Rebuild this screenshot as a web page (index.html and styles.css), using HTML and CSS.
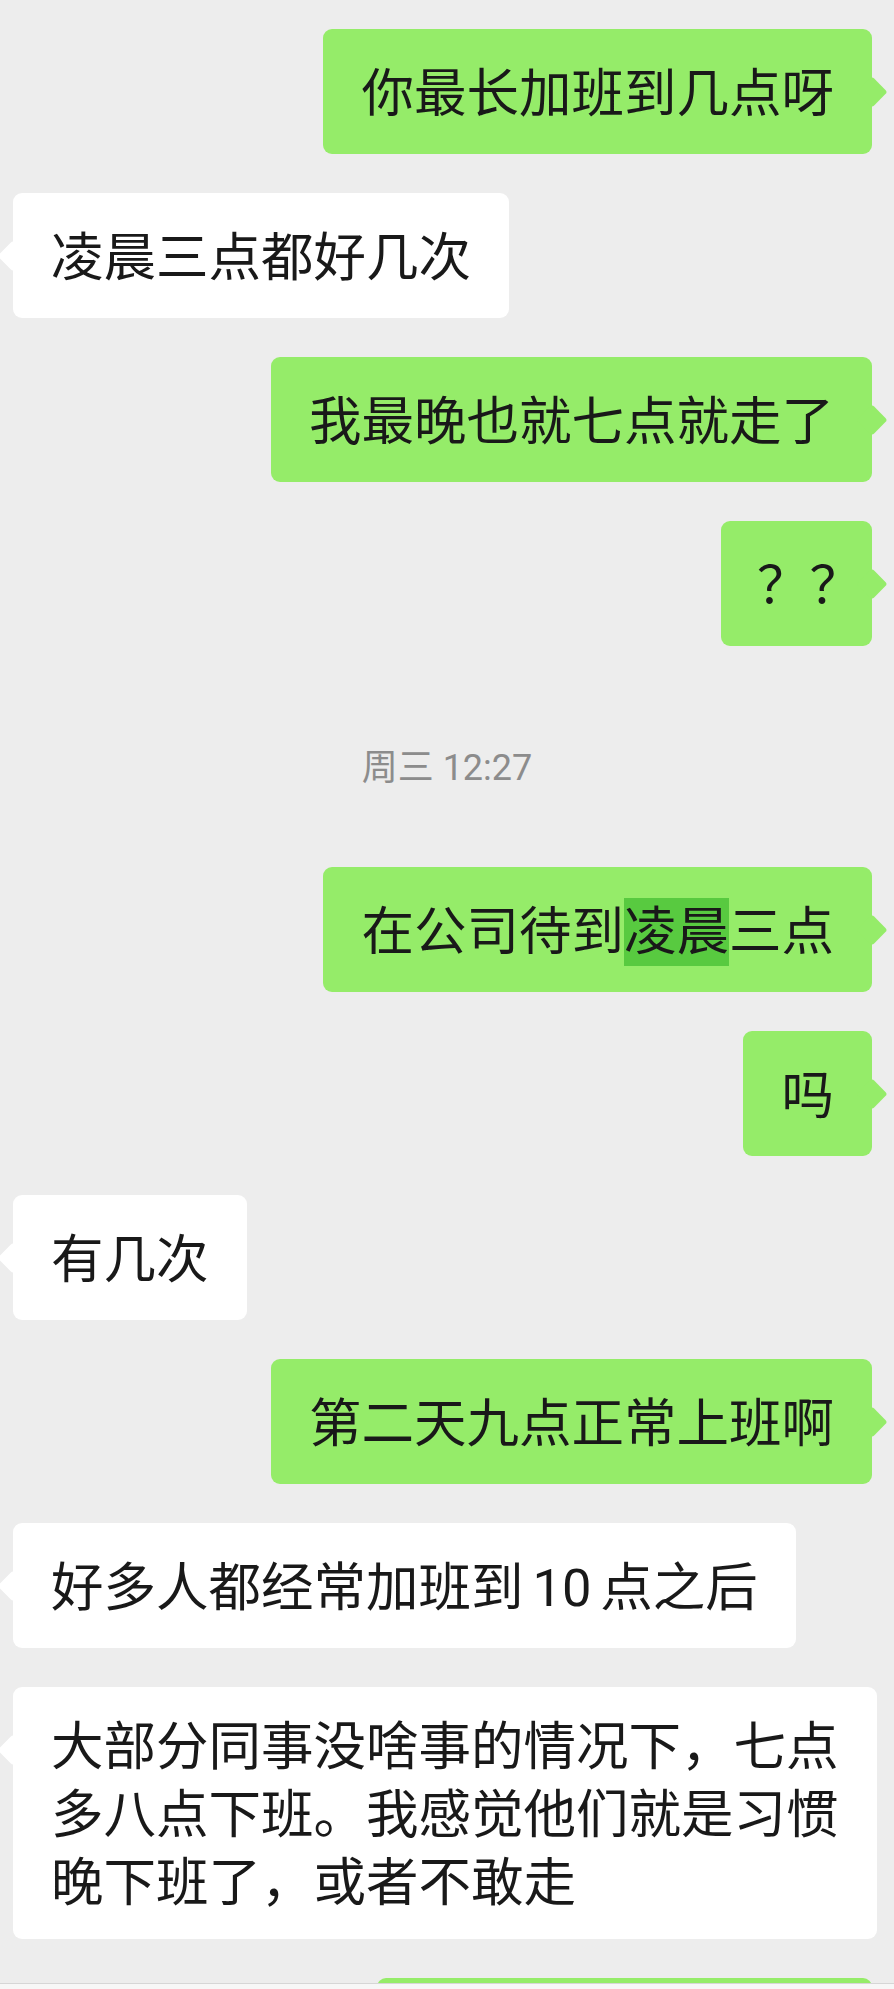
FILE: index.html
```html
<!DOCTYPE html>
<html lang="zh-CN">
<head>
    <meta charset="UTF-8">
    <meta name="viewport" content="width=device-width, initial-scale=1.0">
    <title>聊天记录</title>
    <link rel="stylesheet" href="styles.css">
</head>
<body>
    <div class="chat">
        <div class="row me"><div class="bubble"><p class="text">你最长加班到几点呀</p></div></div>
        <div class="row other"><div class="bubble"><p class="text">凌晨三点都好几次</p></div></div>
        <div class="row me"><div class="bubble"><p class="text">我最晚也就七点就走了</p></div></div>
        <div class="row me"><div class="bubble bubble-short"><p class="text">？？</p></div></div>

        <div class="time">周三 12:27</div>

        <div class="row me"><div class="bubble"><p class="text">在公司待到<span class="hl">凌晨</span>三点</p></div></div>
        <div class="row me"><div class="bubble"><p class="text">吗</p></div></div>
        <div class="row other"><div class="bubble"><p class="text">有几次</p></div></div>
        <div class="row me"><div class="bubble"><p class="text">第二天九点正常上班啊</p></div></div>
        <div class="row other"><div class="bubble"><p class="text">好多人都经常加班到&#8198;10&#8198;点之后</p></div></div>
        <div class="row other"><div class="bubble"><p class="text">大部分同事没啥事的情况下，七点多八点下班。我感觉他们就是习惯晚下班了，或者不敢走</p></div></div>
        <div class="row me"><div class="bubble bubble-cut"></div></div>
    </div>
    <div class="bar"></div>
</body>
</html>
```

FILE: styles.css
```css
body {
    margin: 0;
    height: 1989px;
    overflow: hidden;
    background: #ededed;
    color: #191919;
    font-family: Roboto, "Noto Sans CJK SC", sans-serif;
    display: flex;
    flex-direction: column;
}
.chat {
    flex: 1;
    overflow: hidden;
    padding-top: 29px;
}
.row {
    display: flex;
    margin-bottom: 39px;
}
.row.me {
    justify-content: flex-end;
    padding-right: 22px;
}
.row.other {
    justify-content: flex-start;
    padding-left: 13px;
}
.bubble {
    position: relative;
    box-sizing: border-box;
    max-width: 864px;
    min-height: 125px;
    padding: 26px 38px 22px 38px;
    border-radius: 9px;
    display: flex;
    align-items: center;
}
.bubble::after {
    content: "";
    position: absolute;
    top: 52px;
    width: 22px;
    height: 22px;
    border-radius: 3px;
    transform: rotate(45deg);
}
.me .bubble,
.me .bubble::after {
    background: #95ec69;
}
.other .bubble,
.other .bubble::after {
    background: #ffffff;
}
.me .bubble::after {
    right: -11px;
}
.other .bubble::after {
    left: -11px;
}
.text {
    margin: 0;
    font-size: 52.5px;
    line-height: 68px;
    position: relative;
    z-index: 1;
}
.bubble-short {
    padding-left: 36px;
    padding-right: 10px;
}
.bubble-cut {
    width: 495px;
}
.hl {
    display: inline-block;
    background: #58ca40;
}
.time {
    text-align: center;
    font-size: 36px;
    line-height: 48px;
    color: #8c8c8c;
    padding: 59px 0 36px 0;
    margin-bottom: 39px;
}
.bar {
    height: 5px;
    flex-shrink: 0;
    border-top: 1px solid #d6d6d6;
    background: #f7f7f7;
}
```
